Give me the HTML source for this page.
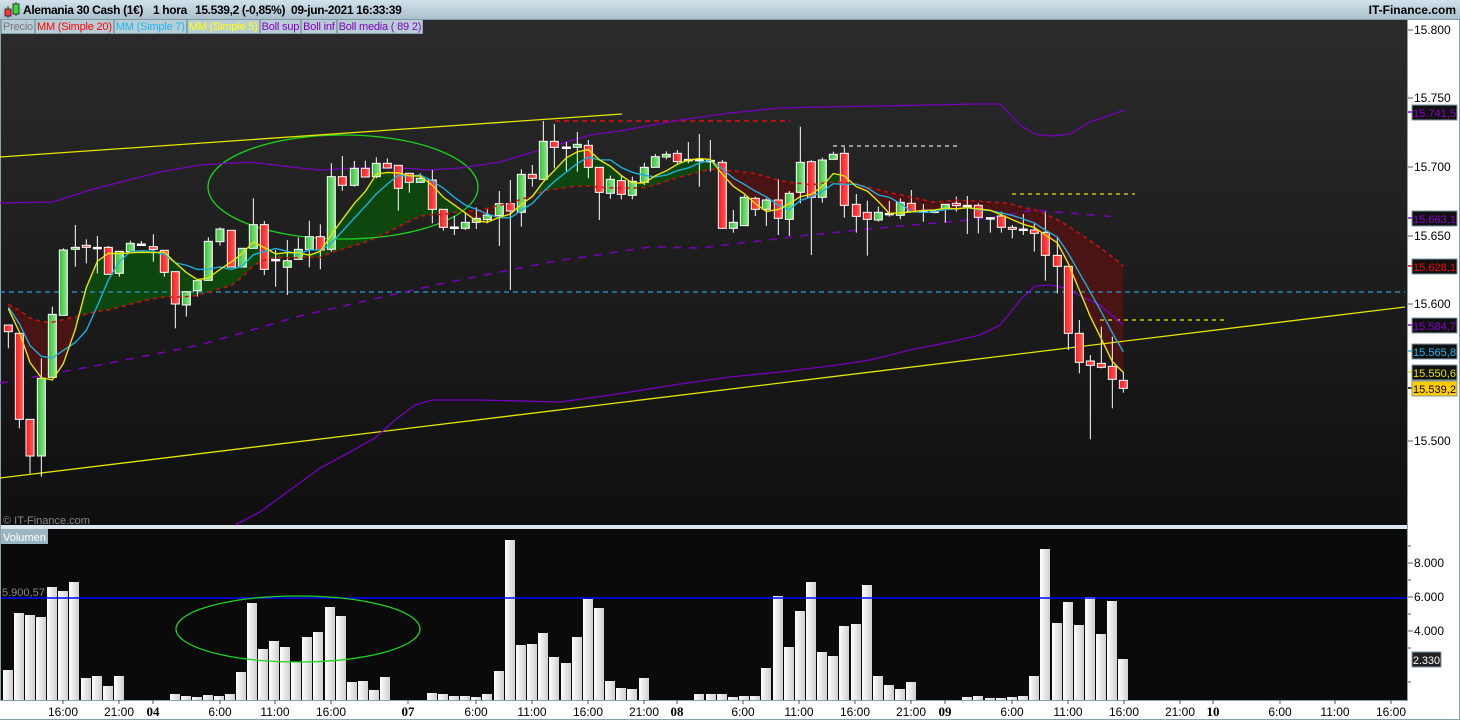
<!DOCTYPE html>
<html><head><meta charset="utf-8">
<style>
html,body{margin:0;padding:0;width:1460px;height:720px;overflow:hidden;background:#fff;font-family:"Liberation Sans",sans-serif}
#hdr{position:absolute;left:0;top:0;width:1460px;height:20px;background:linear-gradient(#d2e2ea,#a9c0cc);border-bottom:1px solid #7f98a6;box-sizing:border-box}
#hdr b{position:absolute;top:3px;font-size:12px;font-weight:bold;color:#000;white-space:nowrap;letter-spacing:-0.35px}
#itf{position:absolute;right:4px;top:3px;font-size:12px;font-weight:bold;color:#000}
#leg{position:absolute;left:1px;top:20px;height:14px;display:flex;font-size:11px;line-height:14px;letter-spacing:-0.2px}
#leg span{background:#b9cdd6;border:1px solid #8aa2ae;border-top:none;padding:0 1px}
svg{position:absolute;left:0;top:0}
</style></head><body>
<svg id="s" width="1460" height="720" xmlns="http://www.w3.org/2000/svg">
<defs>
<linearGradient id="bg" x1="0" y1="0" x2="0" y2="1"><stop offset="0" stop-color="#2b2b2b"/><stop offset="1" stop-color="#0f0f0f"/></linearGradient>
<linearGradient id="gg" x1="0" y1="0" x2="1" y2="0"><stop offset="0" stop-color="#35c035"/><stop offset="1" stop-color="#8fe68f"/></linearGradient>
<linearGradient id="rg" x1="0" y1="0" x2="1" y2="0"><stop offset="0" stop-color="#ff1a1a"/><stop offset="1" stop-color="#ff5a5a"/></linearGradient>
<linearGradient id="vg" x1="0" y1="0" x2="1" y2="0"><stop offset="0" stop-color="#ffffff"/><stop offset="1" stop-color="#cfcfcf"/></linearGradient>
</defs>
<rect x="0" y="20" width="1460" height="700" fill="#fff"/>
<rect x="1" y="20" width="1406" height="505" fill="url(#bg)"/>
<rect x="0" y="525" width="1408" height="4" fill="#dfe6ea"/>
<rect x="1" y="529" width="1406" height="171" fill="#0a0a0a"/>
<line x1="0.5" y1="20" x2="0.5" y2="700" stroke="#8aa2ae"/>
<line x1="1407.5" y1="20" x2="1407.5" y2="700" stroke="#8aa2ae"/>
<line x1="0" y1="700.5" x2="1408" y2="700.5" stroke="#8aa2ae"/>
<line x1="1459.5" y1="0" x2="1459.5" y2="720" stroke="#8aa2ae"/>
<line x1="0" y1="719.5" x2="1460" y2="719.5" stroke="#8aa2ae"/>
<g id="fill"></g>
<g id="over"></g>
<g id="cand"></g>
<g id="ma"></g>
<g id="vol"></g>
<g id="ax" font-family="Liberation Sans, sans-serif" font-size="12"></g>
</svg>
<div id="hdr">
<svg width="20" height="20" style="position:absolute;left:2px;top:0">
<line x1="6" y1="6" x2="6" y2="18" stroke="#333"/><rect x="3" y="9" width="6" height="7" fill="#f33" stroke="#333"/>
<line x1="14" y1="2" x2="14" y2="16" stroke="#333"/><rect x="11" y="4" width="6" height="10" fill="#3d3" stroke="#333"/>
</svg>
<b style="left:23px">Alemania 30 Cash (1€)</b><b style="left:153px">1 hora</b><b style="left:195px">15.539,2 (-0,85%)</b><b style="left:291px">09-jun-2021 16:33:39</b>
<div id="itf">IT-Finance.com</div>
</div>
<div id="leg"><span style="color:#777">Precio</span><span style="color:#f00">MM (Simple 20)</span><span style="color:#1ab8f0">MM (Simple 7)</span><span style="color:#ff0">MM (Simple 5)</span><span style="color:#8000c0">Boll sup</span><span style="color:#8000c0">Boll inf</span><span style="color:#8000c0">Boll media ( 89 2)</span></div>
<script>
var NS="http://www.w3.org/2000/svg";
function el(p,t,a,txt){var e=document.createElementNS(NS,t);for(var k in a)e.setAttribute(k,a[k]);if(txt!=null)e.textContent=txt;document.getElementById(p).appendChild(e);return e;}
var C=[];
function seg(ox,oy,L){L.forEach(function(d){C.push({x:ox+d[0]/3,t:oy+d[1]/3,b:oy+d[2]/3,h:oy+d[3]/3,l:oy+d[4]/3,k:d[5]});});}
seg(0,130,[[25,585,605,585,655,'r'],[58,610,868,610,895,'r'],[90,868,978,868,1030,'r'],[124,745,978,685,1040,'g'],[157,553,742,530,742,'g'],[190,360,556,355,556,'g'],[226,352,358,285,410,'g'],[259,346,352,328,400,'r'],[292,352,355,318,430,'d'],[325,352,433,348,433,'r'],[358,364,430,364,440,'g'],[391,340,365,332,365,'g'],[424,342,346,333,346,'d'],[460,350,358,313,395,'r'],[493,361,427,361,440,'r'],[526,425,522,425,595,'r'],[559,485,525,485,560,'g'],[592,452,482,452,500,'g'],[625,334,451,322,451,'g'],[660,297,335,292,347,'g'],[694,301,411,301,411,'r'],[727,355,411,355,411,'g'],[760,284,355,205,355,'g'],[793,284,418,273,435,'r'],[827,388,392,360,470,'d'],[862,392,412,330,495,'g'],[895,358,388,322,388,'g'],[928,320,358,272,412,'g'],[961,320,360,283,418,'r'],[994,140,358,100,365,'g'],[1027,140,166,78,182,'r'],[1063,115,166,93,170,'g'],[1096,115,141,92,141,'r'],[1129,100,140,82,145,'g'],[1162,100,114,85,114,'r'],[1195,106,175,106,242,'r'],[1228,130,157,130,188,'r'],[1261,145,157,130,157,'g'],[1297,150,238,120,280,'r'],[1330,238,292,238,302,'r']]);
seg(430,110,[[73,351,354,318,375,'d'],[106,337,355,308,360,'g'],[139,325,337,292,357,'g'],[172,315,329,298,340,'g'],[208,281,317,243,408,'g'],[241,281,303,210,540,'r'],[274,193,307,178,350,'g'],[307,193,205,165,230,'r'],[340,94,208,33,208,'g'],[373,94,112,42,175,'r'],[409,111,114,96,183,'d'],[442,103,112,66,185,'g'],[475,106,172,90,205,'r'],[508,172,247,172,330,'r'],[541,208,250,197,266,'g'],[574,212,253,195,268,'r'],[607,214,256,200,268,'g'],[643,172,217,158,225,'g'],[676,140,172,132,172,'g'],[709,133,141,124,148,'g'],[742,130,155,120,160,'r'],[775,148,152,96,160,'d'],[808,148,152,72,230,'d'],[841,151,154,90,185,'d'],[877,157,355,150,355,'r'],[910,337,355,300,368,'g'],[943,262,347,255,347,'g'],[976,265,298,260,318,'r'],[1009,270,298,265,348,'g'],[1045,270,325,208,375,'r'],[1078,250,328,243,378,'g'],[1111,157,247,50,280,'g'],[1144,155,262,150,435,'r'],[1177,150,262,143,278,'g'],[1210,133,148,125,148,'g'],[1243,130,286,112,323,'r'],[1279,283,319,252,368,'r'],[1312,307,328,272,437,'r'],[1345,307,330,290,335,'g']]);
seg(700,130,[[568,250,253,213,260,'d'],[601,217,256,205,268,'g'],[634,220,245,180,245,'r'],[670,242,245,222,275,'d'],[703,243,246,240,250,'d'],[736,223,238,223,278,'g'],[769,220,227,200,245,'r'],[802,226,230,198,312,'d'],[835,226,262,220,310,'r'],[871,263,266,262,308,'d'],[904,258,292,245,308,'r'],[937,292,298,285,325,'r'],[970,297,300,252,315,'d'],[1003,300,310,280,365,'r'],[1036,307,376,245,452,'r'],[1072,376,409,320,490,'r'],[1105,409,610,409,660,'r'],[1138,610,697,570,730,'r'],[1171,693,706,675,928,'r'],[1204,700,712,590,715,'r'],[1237,709,748,620,835,'r'],[1270,751,775,725,788,'r']]);
var cl=C.map(function(c){return c.k=='g'?c.t:(c.k=='r'?c.b:(c.t+c.b)/2);});
var hist=[];for(var i=0;i<19;i++)hist.push(303);
var all=hist.concat(cl);
function ma(n){var r=[];for(var i=0;i<cl.length;i++){var s=0;var j0=i+19;for(var j=j0-n+1;j<=j0;j++)s+=all[j];r.push(s/n);}return r;}
var m20=ma(20),m7=ma(7),m5=ma(5);
for(var i=0;i<C.length-1;i++){
  var a=C[i],b=C[i+1];var up=(m5[i]+m5[i+1])<(m20[i]+m20[i+1]);
  el('fill','polygon',{points:a.x+','+m5[i]+' '+b.x+','+m5[i+1]+' '+b.x+','+m20[i+1]+' '+a.x+','+m20[i],fill:up?'#0e470e':'#4a1414'});
}
function pl(g,pts,col,w,dash){var s=pts.map(function(p){return p[0]+','+p[1];}).join(' ');var a={points:s,fill:'none',stroke:col,'stroke-width':w||1.3};if(dash)a['stroke-dasharray']=dash;el(g,'polyline',a);}
el('over','ellipse',{cx:343,cy:187,rx:135,ry:52,fill:'none',stroke:'#1bd41b','stroke-width':1.3});
pl('over',[[0,157],[622,114]],'#e6e600',1.3);
pl('over',[[0,478],[1405,307]],'#e6e600',1.3);
pl('over',[[0,292],[1405,292]],'#2a9ad0',1.3,'5,4');
pl('over',[[555,121],[790,121]],'#e01010',1.5,'5,4');
pl('over',[[833,146],[957,146]],'#ddd',1.2,'4,4');
pl('over',[[1012,194],[1135,194]],'#e6e600',1.2,'4,4');
pl('over',[[1100,320],[1225,320]],'#e6e600',1.2,'4,4');
pl('over',[[0,203],[53,202],[90,190],[160,172],[200,165],[250,162],[300,168],[320,170],[355,168],[400,168],[430,170],[460,168],[500,162],[540,150],[590,135],[620,131],[680,120],[730,113],[780,108],[820,107],[880,106],[930,105],[975,104],[1000,104],[1020,125],[1035,134],[1050,136],[1070,134],[1090,122],[1110,115],[1125,110]],'#7a00c0',1.3);
pl('over',[[235,525],[260,512],[290,490],[320,468],[350,452],[375,438],[395,420],[415,405],[432,400],[480,400],[560,402],[590,398],[630,392],[680,384],[730,377],[780,372],[830,366],[870,360],[910,350],[950,342],[980,335],[1000,325],[1010,313],[1020,300],[1035,286],[1050,285],[1065,288],[1085,298],[1100,305],[1123,325]],'#7a00c0',1.3);
pl('over',[[0,383],[100,365],[200,345],[300,316],[400,293],[440,284],[550,262],[650,247],[700,248],[800,236],[880,228],[990,218],[1033,210],[1117,217]],'#7a00c0',1.5,'8,8');
C.forEach(function(c){
  el('cand','line',{x1:c.x,y1:c.h,x2:c.x,y2:c.l,stroke:'#fff','stroke-width':1});
  var h=Math.max(c.b-c.t,1.5);
  el('cand','rect',{x:c.x-4,y:c.t,width:8,height:h,fill:c.k=='g'?'url(#gg)':(c.k=='r'?'url(#rg)':'#fff'),stroke:'#fff','stroke-width':1});
});
pl('ma',C.map(function(c,i){return [c.x,m20[i]];}),'#d01010',1.5,'4,4');
pl('ma',C.map(function(c,i){return [c.x,m7[i]];}),'#1ab0e0',1.4);
pl('ma',C.map(function(c,i){return [c.x,m5[i]];}),'#e6e600',1.4);
var V=[[8,670],[19,613],[30,615],[41,617],[52,587],[63,591],[74,582],[86,678],[97,676],[108,686],[119,676],[175,694],[186,696],[197,697],[208,695],[219,696],[230,694],[241,672],[252,603],[263,649],[274,641],[285,647],[296,662],[307,637],[318,632],[330,607],[341,616],[352,682],[363,681],[374,690],[385,677],[432,693],[443,694],[454,696],[465,696],[476,697],[487,694],[499,671],[510,540],[521,645],[532,644],[543,633],[554,657],[566,663],[577,637],[588,599],[599,608],[610,681],[621,688],[632,689],[644,678],[699,694],[711,694],[722,694],[733,697],[744,696],[755,696],[766,668],[778,596],[789,647],[800,611],[811,582],[822,652],[833,656],[844,626],[856,624],[867,585],[878,676],[889,685],[900,689],[911,682],[967,697],[978,696],[990,698],[1001,698],[1012,697],[1023,696],[1034,676],[1045,549],[1057,623],[1068,602],[1079,625],[1090,597],[1101,634],[1112,601],[1123,659]];
V.forEach(function(v){el('vol','rect',{x:v[0]-5,y:v[1],width:10,height:700-v[1],fill:'url(#vg)'});});
el('vol','line',{x1:1,y1:598,x2:1407,y2:598,stroke:'#0000ff','stroke-width':1.5});
el('vol','ellipse',{cx:298,cy:629,rx:122,ry:33,fill:'none',stroke:'#1bd41b','stroke-width':1.3});
el('vol','text',{x:2,y:596,fill:'#888','font-size':11,'font-family':'Liberation Sans, sans-serif'},'5.900,57');
el('vol','rect',{x:1,y:529,width:47,height:15,fill:'#9db5c2'});
el('vol','text',{x:3,y:541,fill:'#fff','font-size':11,'font-family':'Liberation Sans, sans-serif'},'Volumen');
el('vol','text',{x:3,y:524,fill:'#888','font-size':11,'font-family':'Liberation Sans, sans-serif'},'© IT-Finance.com');
[['15.800',30],['15.750',98],['15.700',167],['15.650',236],['15.600',304],['15.500',441]].forEach(function(p){
  el('ax','line',{x1:1408,y1:p[1],x2:1413,y2:p[1],stroke:'#555'});
  el('ax','text',{x:1414,y:p[1]+4,fill:'#000'},p[0]);
});
[['15.741,5',112,'#8a00d0','#111'],['15.663,1',218,'#8a00d0','#111'],['15.628,1',266,'#f00','#111'],['15.584,7',325,'#8a00d0','#111'],['15.565,8',351,'#1ab8f0','#111'],['15.550,6',372,'#e6e600','#111'],['15.539,2',388,'#000','#ffcc00']].forEach(function(t){
  el('ax','line',{x1:1408,y1:t[1],x2:1413,y2:t[1],stroke:t[2]=='#000'?'#000':t[2],'stroke-width':1.5});
  el('ax','rect',{x:1412,y:t[1]-7,width:45,height:15,fill:t[3],stroke:'#7f98a6'});
  el('ax','text',{x:1413,y:t[1]+5,fill:t[2],'font-size':11,textLength:43,lengthAdjust:'spacingAndGlyphs'},t[0]);
});
[['8.000',563],['6.000',597],['4.000',631]].forEach(function(p){
  el('ax','line',{x1:1408,y1:p[1],x2:1413,y2:p[1],stroke:'#555'});
  el('ax','text',{x:1414,y:p[1]+4,fill:'#000'},p[0]);
});
[546,580,614,648,682].forEach(function(y){el('ax','line',{x1:1408,y1:y,x2:1411,y2:y,stroke:'#555'});});
el('ax','rect',{x:1412,y:652,width:29,height:15,fill:'#222',stroke:'#7f98a6'});
el('ax','text',{x:1413,y:664,fill:'#fff','font-size':11,textLength:27,lengthAdjust:'spacingAndGlyphs'},'2.330');
[['16:00',63],['21:00',119],['04',153,1],['6:00',220],['11:00',275],['16:00',331],['07',408,1],['6:00',476],['11:00',532],['16:00',588],['21:00',644],['08',677,1],['6:00',743],['11:00',799],['16:00',855],['21:00',911],['09',945,1],['6:00',1012],['11:00',1068],['16:00',1124],['21:00',1180],['10',1213,1],['6:00',1280],['11:00',1335],['16:00',1391]].forEach(function(t){
  el('ax','line',{x1:t[1],y1:700,x2:t[1],y2:704,stroke:'#555'});
  var a={x:t[1],y:716,fill:'#000','text-anchor':'middle'};
  if(t[2]){a['font-weight']='bold';a['font-family']='Liberation Serif, serif';a['font-size']=13;}
  el('ax','text',a,t[0]);
});
</script>
</body></html>
